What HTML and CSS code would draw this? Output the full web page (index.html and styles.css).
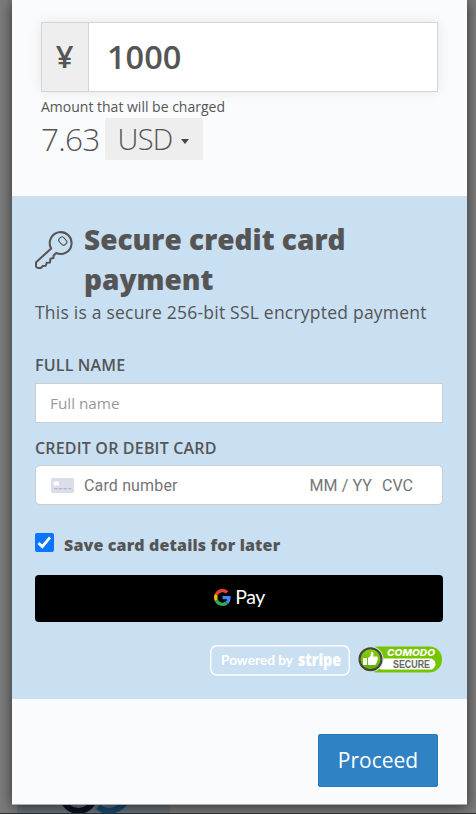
FILE: index.html
```html
<!DOCTYPE html>
<html lang="en">
<head>
  <meta charset="UTF-8">
  <title>Secure payment</title>
  <link rel="stylesheet" href="styles.css">
</head>
<body>

  <form class="modal">
    <section class="amount">
      <div class="input-group">
        <span class="addon">¥</span>
        <input class="amount-input" type="text" value="1000">
      </div>
      <p class="hint">Amount that will be charged</p>
      <div class="charged">
        <span class="charged-value">7.63</span>
        <button class="currency" type="button"><span>USD</span><i class="caret"></i></button>
      </div>
    </section>

    <section class="secure">
      <div class="secure-head">
        <svg class="key" viewBox="0 0 40 40" fill="none" stroke="#555" stroke-width="2.1" stroke-linejoin="round">
          <path d="M16.2 17.2 A11.2 11.2 0 1 1 21.7 22.6 L19.1 25.1 L18.9 27.8 L15.8 28.4 L15.4 32.3 L12 32.6 L11 35.7 L8 35.8 L6.3 37.9 L2.8 37.8 Q1 37.6 1 35.8 L1.1 32 L16.6 18 Z"/>
          <rect x="25.4" y="6" width="6.2" height="8.6" rx="2.5" stroke-width="1.1" transform="rotate(-43 28.5 10.3)"/>
        </svg>
        <h2>Secure credit card payment</h2>
      </div>
      <p class="lead">This is a secure 256-bit SSL encrypted payment</p>

      <label class="field-label" for="name">FULL NAME</label>
      <input class="field" type="text" id="name" placeholder="Full name">

      <label class="field-label card-label" for="card">CREDIT OR DEBIT CARD</label>
      <div class="field card-field">
        <svg class="card-icon" viewBox="0 0 23 15">
          <rect width="23" height="15" rx="1.5" fill="#d9dee8"/>
          <rect x="2.5" y="3.5" width="5.5" height="4" rx="1" fill="#fff"/>
          <path d="M3 10.7h17.5" stroke="#b0b9cb" stroke-width="1.2" stroke-dasharray="3.5 1.2"/>
        </svg>
        <input class="card-number" type="text" id="card" placeholder="Card number">
        <span class="card-date">MM / YY</span>
        <span>CVC</span>
      </div>

      <label class="save">
        <input type="checkbox" checked>
        <svg class="check" viewBox="0 0 19 19">
          <rect width="19" height="19" rx="2" fill="#0b75ff"/>
          <path d="M3.5 10 L7.3 13.6 L15 4.3" fill="none" stroke="#fff" stroke-width="2.8"/>
        </svg>
        <span>Save card details for later</span>
      </label>

      <button class="gpay" type="button">
        <svg class="g-logo" viewBox="0 0 48 48">
          <path fill="#EA4335" d="M24 9.5c3.54 0 6.71 1.22 9.21 3.6l6.85-6.85C35.9 2.38 30.47 0 24 0 14.62 0 6.51 5.38 2.56 13.22l7.98 6.19C12.43 13.72 17.74 9.5 24 9.5z"/>
          <path fill="#4285F4" d="M46.98 24.55c0-1.57-.15-3.09-.38-4.55H24v9.02h12.94c-.58 2.96-2.26 5.48-4.78 7.18l7.73 6c4.51-4.18 7.09-10.36 7.09-17.65z"/>
          <path fill="#FBBC05" d="M10.53 28.59c-.48-1.45-.76-2.99-.76-4.59s.27-3.14.76-4.59l-7.98-6.19C.92 16.46 0 20.12 0 24c0 3.88.92 7.54 2.56 10.78l7.97-6.19z"/>
          <path fill="#34A853" d="M24 48c6.48 0 11.93-2.13 15.89-5.81l-7.73-6c-2.15 1.45-4.92 2.3-8.16 2.3-6.26 0-11.57-4.22-13.47-9.91l-7.98 6.19C6.51 42.62 14.62 48 24 48z"/>
        </svg>
        <span>Pay</span>
      </button>

      <div class="badges">
        <svg class="stripe" width="140" height="31" viewBox="0 0 140 31">
          <rect x=".8" y=".8" width="138.4" height="29.2" rx="6" fill="none" stroke="#fff" stroke-width="1.4"/>
          <text class="powered" x="11" y="20" textLength="72" lengthAdjust="spacingAndGlyphs">Powered by</text>
          <text class="stripe-name" x="88" y="20.5" textLength="43" lengthAdjust="spacingAndGlyphs">stripe</text>
        </svg>
        <svg class="comodo" width="86" height="29" viewBox="0 0 86 29">
          <defs>
            <linearGradient id="green" x2="0" y2="1">
              <stop offset="0" stop-color="#8ad010"/>
              <stop offset="1" stop-color="#5fae00"/>
            </linearGradient>
          </defs>
          <rect x="8" y="1.5" width="77" height="26" rx="12.5" fill="#76c500"/>
          <rect x="20" y="13.5" width="58.5" height="11" rx="5.5" fill="#fff"/>
          <text class="comodo-name" x="30" y="11" textLength="48" lengthAdjust="spacingAndGlyphs">COMODO</text>
          <text class="comodo-secure" x="36" y="23.2" textLength="37" lengthAdjust="spacingAndGlyphs">SECURE</text>
          <circle cx="13.5" cy="14.2" r="13" fill="#ddd"/>
          <circle cx="13.5" cy="14.2" r="11" fill="url(#green)" stroke="#3f4740" stroke-width="2"/>
          <path fill="#fff" d="M6 13h4v7H6zM11 13l2.5-2 .8-4.300q2.300 0 2.200 2.200l-.4 2.600h4q1.500 1 .4 2.300.8 1.200-.3 2.100.4 1.300-.8 1.800 0 1.800-1.500 2.300H11z"/>
        </svg>
      </div>
    </section>

    <footer class="actions">
      <button class="proceed" type="submit">Proceed</button>
    </footer>
  </form>

  <div class="page-behind">
    <svg width="153" height="8" viewBox="0 0 153 8">
      <rect width="153" height="8" fill="#68727a"/>
      <circle cx="61.5" cy="-10" r="16" fill="none" stroke="#0a1424" stroke-width="6"/>
      <path d="M81 2 Q95 12 109 -3" fill="none" stroke="#164a74" stroke-width="6"/>
    </svg>
  </div>

</body>
</html>
```

FILE: styles.css
```css
* {
  box-sizing: border-box;
}
body {
  margin: 0;
  height: 814px;
  overflow: hidden;
  background-color: #7b7b7b;
  color: #555;
  font-family: "Open Sans", sans-serif;
}
input, button {
  font-family: inherit;
  color: inherit;
  margin: 0;
}
h2, p {
  margin: 0;
}
.modal {
  position: relative;
  z-index: 1;
  width: 455px;
  height: 805px;
  margin-left: 12px;
  background-color: #f9fbfd;
  border-bottom: 1px solid #aaa;
  box-shadow: 0 2px 12px rgba(0, 0, 0, 0.6);
}

/* amount */
.amount {
  height: 196px;
  padding: 22px 29px 0;
}
.input-group {
  display: flex;
  height: 70px;
  border: 1px solid #d2d4d5;
  box-shadow: 0 0 12px rgba(0, 0, 0, 0.09);
}
.addon {
  width: 47px;
  padding-right: 1px;
  background-color: #eee;
  border-right: 1px solid #d2d4d5;
  font-size: 31px;
  font-weight: 600;
  line-height: 67px;
  text-align: center;
}
.amount-input {
  flex: 1;
  min-width: 0;
  padding: 0 18px 1px;
  border: none;
  background-color: #fff;
  font-size: 32.5px;
  font-weight: 600;
}
.hint {
  padding-top: 4px;
  font-size: 14px;
  line-height: 21px;
}
.charged {
  display: flex;
  gap: 6px;
  font-size: 31.5px;
  font-weight: 300;
  letter-spacing: -0.7px;
  line-height: 42px;
}
.charged-value {
  width: 58px;
  line-height: 44px;
}
.currency {
  display: flex;
  align-items: center;
  justify-content: center;
  gap: 9px;
  width: 98px;
  height: 42px;
  margin-top: 1px;
  padding: 0 1px 1px 0;
  border: none;
  border-radius: 2px;
  background-color: #eee;
  font-size: 29px;
  font-weight: 300;
  letter-spacing: -0.8px;
}
.caret {
  margin-top: 5px;
  border-top: 5px solid #444;
  border-left: 4.5px solid transparent;
  border-right: 4.5px solid transparent;
}

/* card details */
.secure {
  height: 503px;
  padding: 23px 24px 0 23px;
  background-color: #c9dff2;
}
.secure-head {
  display: flex;
  gap: 10px;
}
.key {
  width: 39px;
  height: 39px;
  margin-top: 12px;
}
h2 {
  flex: 1;
  font-size: 28px;
  font-weight: 800;
  line-height: 40px;
}
.lead {
  padding-top: 1px;
  font-size: 17.5px;
  letter-spacing: 0.22px;
  line-height: 25px;
  white-space: nowrap;
}
.field-label {
  display: block;
  margin-top: 28px;
  font-size: 16px;
  font-weight: 600;
  letter-spacing: 0.18px;
  line-height: 24px;
}
.card-label {
  margin-top: 13px;
}
.field {
  display: block;
  width: 408px;
  height: 40px;
  margin-top: 6px;
  padding: 0 14px 1px;
  border: 1px solid #ccc;
  background-color: #fff;
  font-size: 15.3px;
}
.field::placeholder {
  color: #999;
}
.card-field {
  display: flex;
  align-items: center;
  gap: 10px;
  padding: 0 29px 0 15px;
  border-radius: 5px;
  color: #757575;
  font-family: Roboto, sans-serif;
  font-size: 16px;
}
.card-label + .card-field {
  margin-top: 5px;
}
.card-icon {
  width: 23px;
  height: 15px;
}
.card-number {
  flex: 1;
  min-width: 0;
  padding: 0;
  border: none;
  font-size: 16px;
  letter-spacing: 0.15px;
}
.card-date {
  letter-spacing: 0.1px;
}
.card-number::placeholder {
  color: #757575;
}
.save {
  display: flex;
  gap: 10px;
  height: 24px;
  margin-top: 28px;
  font-size: 16px;
  font-weight: 800;
  letter-spacing: 0.15px;
  line-height: 25px;
}
.save input {
  display: none;
}
.check {
  width: 19px;
  height: 19px;
}
.gpay {
  display: flex;
  align-items: center;
  justify-content: center;
  gap: 4px;
  width: 408px;
  height: 47px;
  margin-top: 18px;
  padding: 0 0 3px 1px;
  border: none;
  border-radius: 4px;
  background-color: #000;
  color: #fff;
  font-family: Lato, sans-serif;
  font-size: 19.5px;
  line-height: 22px;
  letter-spacing: -0.5px;
}
.g-logo {
  width: 17px;
  height: 17px;
}
.badges {
  display: flex;
  justify-content: flex-end;
  gap: 7px;
  margin-top: 23px;
}
.powered, .stripe-name {
  fill: #fff;
  font-family: Lato, sans-serif;
  font-size: 14px;
  font-weight: 700;
}
.stripe-name {
  font-family: "Open Sans", sans-serif;
  font-size: 17px;
  font-weight: 800;
}
.comodo-name {
  fill: #fff;
  font-family: Inter, sans-serif;
  font-size: 9px;
  font-style: italic;
  font-weight: 800;
}
.comodo-secure {
  fill: #666;
  font-family: "Liberation Sans", sans-serif;
  font-size: 11.5px;
  font-weight: 700;
}

/* footer */
.actions {
  display: flex;
  justify-content: flex-end;
  padding: 35px 29px 0;
}
.proceed {
  width: 120px;
  height: 53px;
  padding: 0 0 1px;
  border: 1px solid #2b78b5;
  border-radius: 2px;
  background-color: #2f82c3;
  color: #fff;
  font-size: 21px;
}
.page-behind {
  height: 9px;
  padding-left: 17px;
  border-bottom: 1px solid #333;
}
.page-behind svg {
  display: block;
}
```
